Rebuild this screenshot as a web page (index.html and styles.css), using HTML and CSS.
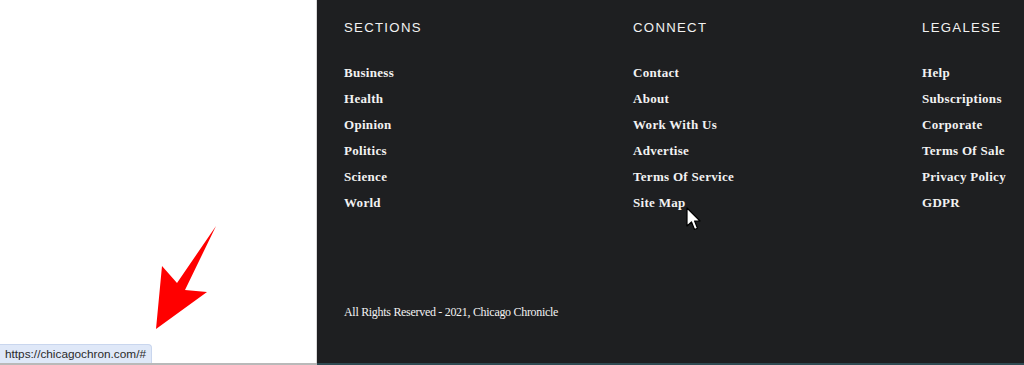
FILE: index.html
```html
<!DOCTYPE html>
<html>
<head>
<meta charset="utf-8">
<link rel="stylesheet" href="styles.css">
</head>
<body>
<div class="page">
  <div class="blank"></div>
  <footer class="footer">
    <div class="cols">
      <div class="col">
        <h4 class="heading">SECTIONS</h4>
        <ul class="links">
          <li><a href="#">Business</a></li>
          <li><a href="#">Health</a></li>
          <li><a href="#">Opinion</a></li>
          <li><a href="#">Politics</a></li>
          <li><a href="#">Science</a></li>
          <li><a href="#">World</a></li>
        </ul>
      </div>
      <div class="col">
        <h4 class="heading">CONNECT</h4>
        <ul class="links">
          <li><a href="#">Contact</a></li>
          <li><a href="#">About</a></li>
          <li><a href="#">Work With Us</a></li>
          <li><a href="#">Advertise</a></li>
          <li><a href="#">Terms Of Service</a></li>
          <li><a href="#">Site Map</a></li>
        </ul>
      </div>
      <div class="col">
        <h4 class="heading">LEGALESE</h4>
        <ul class="links">
          <li><a href="#">Help</a></li>
          <li><a href="#">Subscriptions</a></li>
          <li><a href="#">Corporate</a></li>
          <li><a href="#">Terms Of Sale</a></li>
          <li><a href="#">Privacy Policy</a></li>
          <li><a href="#">GDPR</a></li>
        </ul>
      </div>
    </div>
    <p class="copy">All Rights Reserved - 2021, Chicago Chronicle</p>
  </footer>
</div>
<div class="bottom-strip"><span class="strip-light"></span><span class="strip-dark"></span></div>
<div class="status">https://chicagochron.com/#</div>
<svg class="arrow" width="80" height="120" viewBox="0 0 80 120">
  <polygon points="66,16 35,80 57,82 6,119 12,56 27,73" fill="#ff0000"/>
</svg>
<svg class="cursor" width="16" height="26" viewBox="0 0 16 26">
  <path d="M1 1 L1 19 L5.5 15 L8.5 22.5 L11.5 21.2 L8.6 14 L14 14 Z" fill="#fff" stroke="#000" stroke-width="1.2" stroke-linejoin="round"/>
</svg>
</body>
</html>
```
FILE: styles.css
```css
* { box-sizing: border-box; }
html, body { margin: 0; padding: 0; }
body {
  width: 1024px;
  height: 365px;
  overflow: hidden;
  background: #ffffff;
  position: relative;
}
.page {
  display: flex;
  height: 363px;
}
.blank {
  width: 317px;
  flex: none;
  background: #ffffff;
  border-right: 1px solid #d9d9d9;
}
.footer {
  flex: 1;
  background: #1e1f21;
  padding: 19px 0 0 27px;
  overflow: hidden;
  color: #f2f2f2;
}
.cols {
  display: grid;
  grid-template-columns: 289px 289px 289px;
}
.heading {
  margin: 0;
  font-family: "Liberation Sans", Arial, sans-serif;
  font-weight: normal;
  font-size: 13.2px;
  line-height: 18px;
  letter-spacing: 1.3px;
  color: #f2f2f2;
}
.links {
  list-style: none;
  margin: 22px 0 0;
  padding: 0;
}
.links li {
  height: 26px;
  line-height: 26px;
}
.links a {
  font-family: "Liberation Serif", "Times New Roman", serif;
  font-weight: bold;
  font-size: 13px;
  letter-spacing: 0.3px;
  color: #f2f2f2;
  text-decoration: none;
  white-space: nowrap;
}
.copy {
  margin: 89px 0 0;
  font-family: "Liberation Serif", "Times New Roman", serif;
  font-size: 12px;
  letter-spacing: -0.3px;
  line-height: 16px;
  color: #f2f2f2;
}
.bottom-strip {
  display: flex;
  height: 2px;
}
.strip-light {
  width: 317px;
  background: #b9b9b9;
}
.strip-dark {
  flex: 1;
  background: #2f4a52;
}
.status {
  position: absolute;
  left: 0;
  top: 344px;
  height: 19px;
  padding: 0 5px 0 5px;
  background: #dfe8f8;
  border: 1px solid #c9d6ee;
  border-left: none;
  border-bottom: none;
  border-top-right-radius: 4px;
  font-family: "Liberation Sans", Arial, sans-serif;
  font-size: 11.8px;
  line-height: 18px;
  color: #2a2a2a;
}
.arrow {
  position: absolute;
  left: 150px;
  top: 210px;
}
.cursor {
  position: absolute;
  left: 686px;
  top: 207px;
}
```
